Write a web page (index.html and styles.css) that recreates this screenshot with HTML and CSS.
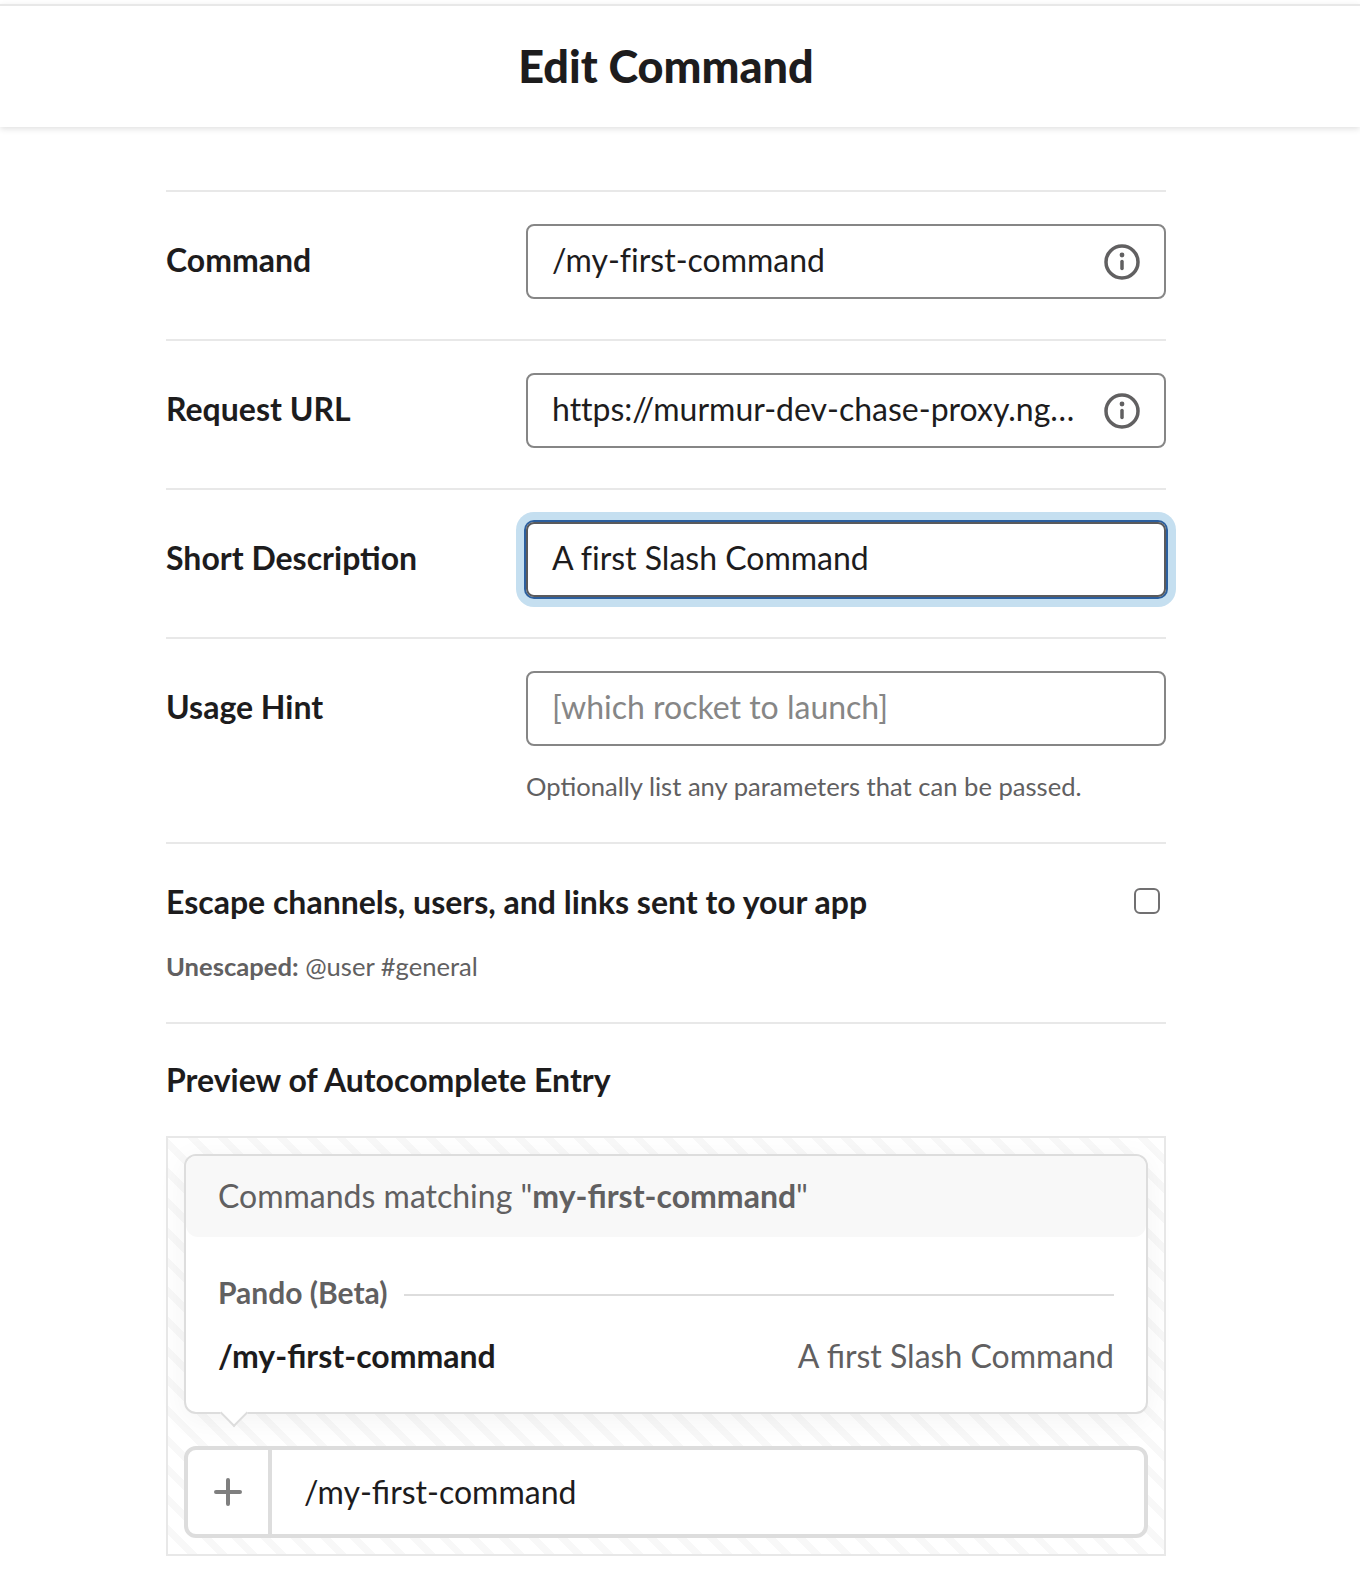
FILE: index.html
```html
<!DOCTYPE html>
<html>

<head>
	<meta charset="utf-8">
	<title>Edit Command</title>
	<link rel="stylesheet" href="styles.css">
</head>

<body>

	<div class="header">
		<h1>Edit Command</h1>
	</div>

	<div class="form">
		<div class="row">
			<div class="label">Command</div>
			<div class="field">
				<div class="input">
					<span class="value">/my-first-command</span>
					<svg class="info" viewBox="0 0 36 36"><circle cx="18" cy="18" r="16" /><circle class="dot" cx="18" cy="11" r="2.4" /><path d="M18 17.5v7" /></svg>
				</div>
			</div>
		</div>

		<div class="row">
			<div class="label">Request URL</div>
			<div class="field">
				<div class="input">
					<span class="value">https://murmur-dev-chase-proxy.ng…</span>
					<svg class="info" viewBox="0 0 36 36"><circle cx="18" cy="18" r="16" /><circle class="dot" cx="18" cy="11" r="2.4" /><path d="M18 17.5v7" /></svg>
				</div>
			</div>
		</div>

		<div class="row">
			<div class="label">Short Description</div>
			<div class="field">
				<div class="input focus">
					<span class="value">A first Slash Command</span>
				</div>
			</div>
		</div>

		<div class="row hint-row">
			<div class="label">Usage Hint</div>
			<div class="field">
				<div class="input">
					<span class="value placeholder">[which rocket to launch]</span>
				</div>
				<div class="hint">Optionally list any parameters that can be passed.</div>
			</div>
		</div>

		<div class="escape">
			<div class="escape-top">
				<div class="label">Escape channels, users, and links sent to your app</div>
				<span class="checkbox"></span>
			</div>
			<div class="escape-note"><b>Unescaped:</b> @user #general</div>
		</div>

		<div class="preview">
			<div class="label">Preview of Autocomplete Entry</div>
			<div class="stage">
				<div class="popup">
					<div class="popup-head">Commands matching "<b>my-first-command</b>"</div>
					<div class="popup-body">
						<div class="group">
							<span>Pando (Beta)</span>
							<i></i>
						</div>
						<div class="entry">
							<b>/my-first-command</b>
							<span>A first Slash Command</span>
						</div>
					</div>
					<div class="tail"></div>
				</div>
				<div class="composer">
					<div class="plus">
						<svg viewBox="0 0 28 28"><path d="M14 2v24M2 14h24" /></svg>
					</div>
					<div class="composer-text">/my-first-command</div>
				</div>
			</div>
		</div>
	</div>

</body>

</html>
```

FILE: styles.css
```css
* {
	padding: 0px;
	margin: 0px;
	box-sizing: border-box;
}

body {
	background-color: #fff;
	color: #1d1c1d;
	font-family: "Lato", "Liberation Sans", sans-serif;
	font-size: 32px;
}

.header {
	position: relative;
	height: 123px;
	margin-top: 4px;
	padding-right: 28px;
	border-top: 2px solid #e8e8e8;
	box-shadow: 0px 2px 6px rgba(0, 0, 0, 0.12);
	text-align: center;
}

h1 {
	font-size: 45px;
	font-weight: 900;
	line-height: 121px;
}

.form {
	width: 1000px;
	margin: 63px 0px 0px 166px;
}

.row {
	display: flex;
	align-items: flex-start;
	height: 149px;
	padding-top: 32px;
	border-top: 2px solid #e8e8e8;
}

.hint-row {
	height: 205px;
}

.label {
	font-weight: 700;
	line-height: 71px;
}

.row .label {
	width: 360px;
}

.field {
	width: 640px;
}

.input {
	display: flex;
	align-items: center;
	justify-content: space-between;
	height: 75px;
	padding: 0px 24px 4px 24px;
	border: 2px solid #868686;
	border-radius: 8px;
	font-variant-ligatures: none;
}

.focus {
	border-color: #5a5a5c;
	box-shadow: 0px 0px 0px 2px #2c5f9e, 0px 0px 0px 10px #c5dff0;
}

.placeholder {
	color: #868686;
}

.info {
	width: 36px;
	height: 36px;
	margin-top: 4px;
	fill: none;
	stroke: #616061;
	stroke-width: 3.5;
	stroke-linecap: round;
}

.info .dot {
	fill: #616061;
	stroke: none;
}

.hint {
	margin-top: 24px;
	color: #616061;
	font-size: 25.6px;
	line-height: 32px;
}

.escape {
	height: 180px;
	padding-top: 26px;
	border-top: 2px solid #e8e8e8;
}

.escape-top {
	display: flex;
	justify-content: space-between;
	align-items: center;
}

.escape-top .label {
	line-height: 64px;
}

.checkbox {
	width: 26px;
	height: 26px;
	margin-right: 6px;
	margin-bottom: 3px;
	border: 2px solid #717071;
	border-radius: 6px;
}

.escape-note {
	margin-top: 15px;
	color: #616061;
	font-size: 25.6px;
	line-height: 34px;
}

.preview {
	padding-top: 20px;
	border-top: 2px solid #e8e8e8;
}

.stage {
	height: 420px;
	margin-top: 21px;
	padding: 16px 16px 0px;
	border: 2px solid #e8e8e8;
	background: repeating-linear-gradient(45deg, #fff 0px, #fff 14px, #f8f8f8 14px, #f8f8f8 21px);
}

.popup {
	position: relative;
	height: 260px;
	border: 2px solid #ddd;
	border-radius: 12px;
	background-color: #fff;
	box-shadow: 0px 6px 30px rgba(0, 0, 0, 0.05);
}

.popup-head {
	height: 81px;
	padding-left: 32px;
	border-radius: 10px 10px 12px 12px;
	background-color: #f8f8f8;
	color: #616061;
	line-height: 80px;
}

.popup-body {
	padding: 0px 32px;
}

.group {
	display: flex;
	align-items: center;
	height: 61px;
	margin-top: 27px;
	color: #616061;
	font-weight: 700;
	font-size: 30px;
}

.group span {
	padding-bottom: 5px;
}

.group i {
	flex: 1;
	height: 2px;
	margin-left: 16px;
	background-color: #ddd;
}

.entry {
	display: flex;
	justify-content: space-between;
	line-height: 62px;
}

.entry span {
	color: #616061;
}

.tail {
	position: absolute;
	left: 38px;
	bottom: -11px;
	width: 20px;
	height: 20px;
	border-right: 2px solid #ddd;
	border-bottom: 2px solid #ddd;
	background-color: #fff;
	transform: rotate(45deg);
}

.composer {
	display: flex;
	height: 92px;
	margin-top: 32px;
	border: 4px solid #ddd;
	border-radius: 12px;
	background-color: #fff;
}

.plus {
	display: flex;
	align-items: center;
	justify-content: center;
	width: 84px;
	border-right: 4px solid #ddd;
}

.plus svg {
	width: 28px;
	height: 28px;
	fill: none;
	stroke: #7f7f7f;
	stroke-width: 4;
	stroke-linecap: round;
}

.composer-text {
	padding-left: 32px;
	line-height: 83px;
}
```
